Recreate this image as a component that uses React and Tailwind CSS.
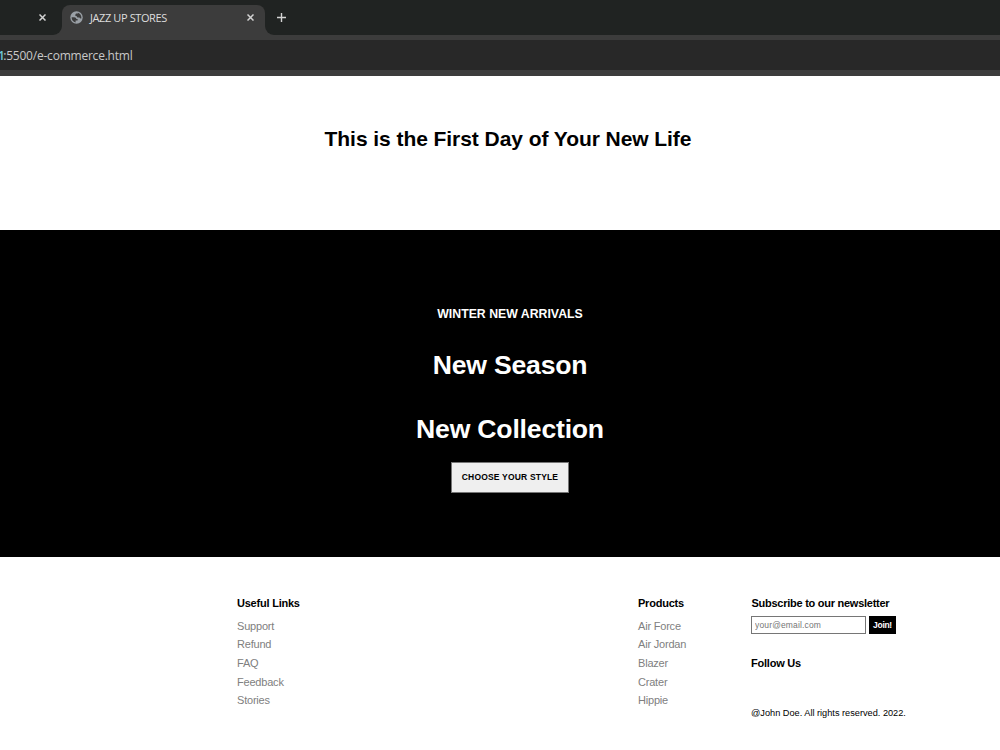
import React from "react";

const usefulLinks = ["Support", "Refund", "FAQ", "Feedback", "Stories"];
const products = ["Air Force", "Air Jordan", "Blazer", "Crater", "Hippie"];

function CloseIcon() {
  return (
    <svg className="block size-[7px]" viewBox="0 0 7 7" fill="none" stroke="#d3d3d3" strokeWidth="1.5">
      <path d="M.5.5l6 6M6.5.5l-6 6" />
    </svg>
  );
}

function GlobeIcon() {
  return (
    <svg className="block size-[13px]" viewBox="0 0 13 13">
      <circle cx="6.5" cy="6.5" r="6.2" fill="#9aa0a6" />
      <path
        d="M1.6 6.300L4.300 6.300C5.400 6.300 6.300 7 6.300 8.100H7.600V9.600H5.600V11.400C3.300 11 1.600 9 1.600 6.300zM7.900 1.700C10 2.300 11.400 4.200 11.400 6.500L11.300 7.400C10.600 7.900 9.700 7.500 9.500 6.600H8.200C7.200 6.600 6.600 5.900 6.600 5.100H5.400V3.700C5.400 2.900 6 2.500 6.700 2.500H7.900z"
        fill="#3c3c3c"
      />
    </svg>
  );
}

function BrowserBar() {
  return (
    <header className="h-[76px] bg-[#3c3c3c] font-['Open_Sans',sans-serif]">
      <div className="flex h-[35px]">
        <div className="flex w-[62px] items-center justify-end rounded-br-[9px] bg-[#202322] pr-[16px]">
          <CloseIcon />
        </div>
        <div className="h-[35px] w-[203px] bg-[linear-gradient(#202322_20px,#3c3c3c_20px)] pt-[5px]">
          <div className="flex h-[30px] items-center rounded-t-[8px] bg-[#3c3c3c] pr-[11px] pb-[5px] pl-[8px]">
            <GlobeIcon />
            <span className="ml-[7px] flex-1 text-[11px] leading-none tracking-[-0.4px] whitespace-nowrap text-[#dedede]">
              JAZZ UP STORES
            </span>
            <CloseIcon />
          </div>
        </div>
        <div className="flex flex-1 items-center rounded-bl-[9px] bg-[#202322] pl-[12px]">
          <svg className="block size-[9px]" viewBox="0 0 9 9" fill="none" stroke="#d3d3d3" strokeWidth="1.4">
            <path d="M4.500 0v9M0 4.500h9" />
          </svg>
        </div>
      </div>
      <div className="mt-[5px] flex h-[30px] items-center overflow-hidden bg-[#282828] pt-[2px]">
        <span className="-ml-[2px] text-[12px] leading-none tracking-[-0.22px] whitespace-nowrap text-[#c8c8c8]">
          <span className="font-semibold tracking-[-1.6px] text-[#6cc4d6]">1</span>:5500/e-commerce.html
        </span>
      </div>
    </header>
  );
}

function LinkColumn({ title, items, className }) {
  return (
    <section className={className}>
      <h3 className="text-[11px] leading-[14px] font-bold tracking-[-0.22px] text-black">{title}</h3>
      <ul className="mt-[6.600px] text-[11px] leading-[18.7px] tracking-[-0.2px] text-[#808080]">
        {items.map((item) => (
          <li key={item}>
            <a>{item}</a>
          </li>
        ))}
      </ul>
    </section>
  );
}

export default function App() {
  return (
    <div className="h-[750px] w-[1000px] overflow-hidden bg-white font-['Liberation_Sans',Arial,sans-serif] text-black">
      <BrowserBar />
      <section className="flex h-[154px] justify-center pt-[50px] pl-[16px]">
        <h2 className="text-[21px] leading-[26px] font-bold tracking-[-0.06px]">
          This is the First Day of Your New Life
        </h2>
      </section>
      <section className="flex h-[327px] flex-col items-center bg-black pt-[76px] pl-[20px] font-bold text-white">
        <h4 className="text-[12.300px] leading-[16px]">WINTER NEW ARRIVALS</h4>
        <h1 className="mt-[27px] text-[26.600px] leading-[32px] tracking-[-0.2px]">New Season</h1>
        <h1 className="mt-[32px] text-[26.600px] leading-[32px] tracking-[-0.2px]">New Collection</h1>
        <button className="mt-[17px] h-[31px] w-[118px] border border-[#767676] bg-[#efefef] text-[8.500px] leading-none font-bold tracking-[0.18px] whitespace-nowrap text-black">
          CHOOSE YOUR STYLE
        </button>
      </section>
      <footer className="flex pt-[39px] pl-[237px]">
        <LinkColumn title="Useful Links" items={usefulLinks} className="w-[401px]" />
        <LinkColumn title="Products" items={products} className="w-[113px]" />
        <section>
          <h3 className="pl-[0.500px] text-[11px] leading-[14px] font-bold tracking-[-0.26px]">
            Subscribe to our newsletter
          </h3>
          <form className="mt-[6px] flex">
            <input
              className="h-[18px] w-[115px] border border-[#767676] bg-white px-[3px] text-[8.500px] tracking-[0.15px] placeholder:text-[#757575]"
              placeholder="your@email.com"
            />
            <button
              type="button"
              className="ml-[3px] h-[18px] w-[27px] bg-black text-[8.500px] leading-none font-bold tracking-[-0.3px] text-white"
            >
              Join!
            </button>
          </form>
          <h3 className="mt-[22px] text-[11px] leading-[14px] font-bold tracking-[-0.22px]">Follow Us</h3>
          <p className="mt-[37px] text-[9.200px] leading-[12px]">@John Doe. All rights reserved. 2022.</p>
        </section>
      </footer>
    </div>
  );
}
